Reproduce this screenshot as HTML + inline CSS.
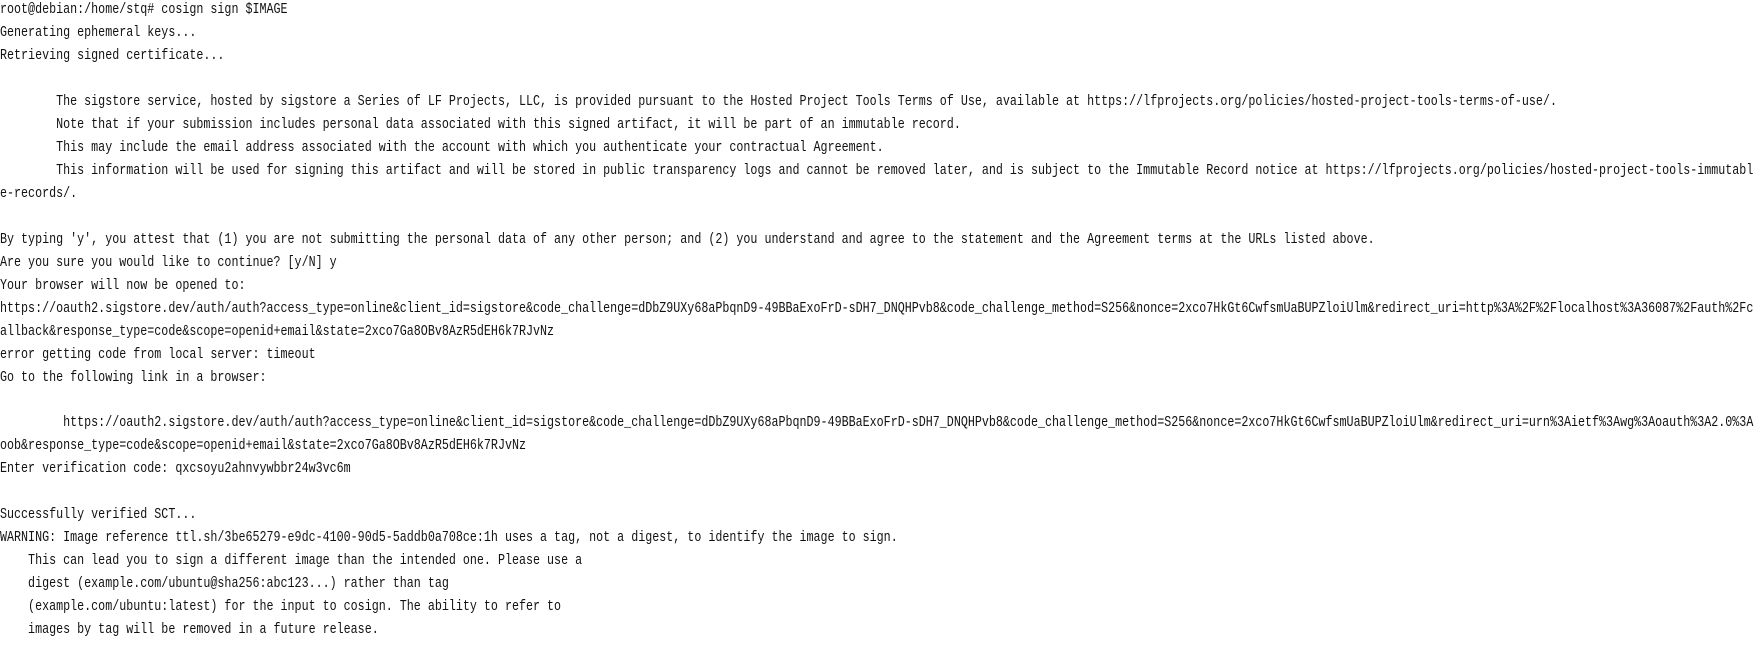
<!DOCTYPE html>
<html><head><meta charset="utf-8"><style>
html,body{margin:0;padding:0;background:#fff;width:1755px;height:662px;overflow:hidden}
pre{margin:0;position:absolute;left:0;top:-1px;font-family:"Liberation Mono","DejaVu Sans Mono",monospace;font-size:14.5px;line-height:22.97px;color:#111;transform:scaleX(0.806);transform-origin:0 0;white-space:pre}
</style></head><body><pre>root@debian:/home/stq# cosign sign $IMAGE
Generating ephemeral keys...
Retrieving signed certificate...

        The sigstore service, hosted by sigstore a Series of LF Projects, LLC, is provided pursuant to the Hosted Project Tools Terms of Use, available at https://lfprojects.org/policies/hosted-project-tools-terms-of-use/.
        Note that if your submission includes personal data associated with this signed artifact, it will be part of an immutable record.
        This may include the email address associated with the account with which you authenticate your contractual Agreement.
        This information will be used for signing this artifact and will be stored in public transparency logs and cannot be removed later, and is subject to the Immutable Record notice at https://lfprojects.org/policies/hosted-project-tools-immutabl
e-records/.

By typing 'y', you attest that (1) you are not submitting the personal data of any other person; and (2) you understand and agree to the statement and the Agreement terms at the URLs listed above.
Are you sure you would like to continue? [y/N] y
Your browser will now be opened to:
https://oauth2.sigstore.dev/auth/auth?access_type=online&amp;client_id=sigstore&amp;code_challenge=dDbZ9UXy68aPbqnD9-49BBaExoFrD-sDH7_DNQHPvb8&amp;code_challenge_method=S256&amp;nonce=2xco7HkGt6CwfsmUaBUPZloiUlm&amp;redirect_uri=http%3A%2F%2Flocalhost%3A36087%2Fauth%2Fc
allback&amp;response_type=code&amp;scope=openid+email&amp;state=2xco7Ga8OBv8AzR5dEH6k7RJvNz
error getting code from local server: timeout
Go to the following link in a browser:

         https://oauth2.sigstore.dev/auth/auth?access_type=online&amp;client_id=sigstore&amp;code_challenge=dDbZ9UXy68aPbqnD9-49BBaExoFrD-sDH7_DNQHPvb8&amp;code_challenge_method=S256&amp;nonce=2xco7HkGt6CwfsmUaBUPZloiUlm&amp;redirect_uri=urn%3Aietf%3Awg%3Aoauth%3A2.0%3A
oob&amp;response_type=code&amp;scope=openid+email&amp;state=2xco7Ga8OBv8AzR5dEH6k7RJvNz
Enter verification code: qxcsoyu2ahnvywbbr24w3vc6m

Successfully verified SCT...
WARNING: Image reference ttl.sh/3be65279-e9dc-4100-90d5-5addb0a708ce:1h uses a tag, not a digest, to identify the image to sign.
    This can lead you to sign a different image than the intended one. Please use a
    digest (example.com/ubuntu@sha256:abc123...) rather than tag
    (example.com/ubuntu:latest) for the input to cosign. The ability to refer to
    images by tag will be removed in a future release.
</pre></body></html>
